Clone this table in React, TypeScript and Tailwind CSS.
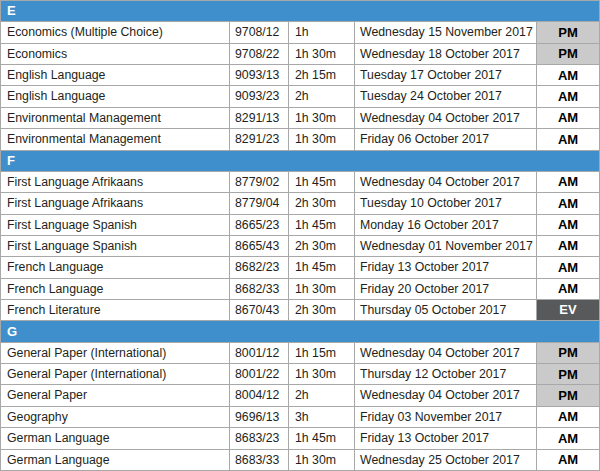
import React from "react";

type Row = [string, string, string, string, "AM" | "PM" | "EV"];

const sections: { letter: string; rows: Row[] }[] = [
  {
    letter: "E",
    rows: [
      ["Economics (Multiple Choice)", "9708/12", "1h", "Wednesday 15 November 2017", "PM"],
      ["Economics", "9708/22", "1h 30m", "Wednesday 18 October 2017", "PM"],
      ["English Language", "9093/13", "2h 15m", "Tuesday 17 October 2017", "AM"],
      ["English Language", "9093/23", "2h", "Tuesday 24 October 2017", "AM"],
      ["Environmental Management", "8291/13", "1h 30m", "Wednesday 04 October 2017", "AM"],
      ["Environmental Management", "8291/23", "1h 30m", "Friday 06 October 2017", "AM"],
    ],
  },
  {
    letter: "F",
    rows: [
      ["First Language Afrikaans", "8779/02", "1h 45m", "Wednesday 04 October 2017", "AM"],
      ["First Language Afrikaans", "8779/04", "2h 30m", "Tuesday 10 October 2017", "AM"],
      ["First Language Spanish", "8665/23", "1h 45m", "Monday 16 October 2017", "AM"],
      ["First Language Spanish", "8665/43", "2h 30m", "Wednesday 01 November 2017", "AM"],
      ["French Language", "8682/23", "1h 45m", "Friday 13 October 2017", "AM"],
      ["French Language", "8682/33", "1h 30m", "Friday 20 October 2017", "AM"],
      ["French Literature", "8670/43", "2h 30m", "Thursday 05 October 2017", "EV"],
    ],
  },
  {
    letter: "G",
    rows: [
      ["General Paper (International)", "8001/12", "1h 15m", "Wednesday 04 October 2017", "PM"],
      ["General Paper (International)", "8001/22", "1h 30m", "Thursday 12 October 2017", "PM"],
      ["General Paper", "8004/12", "2h", "Wednesday 04 October 2017", "PM"],
      ["Geography", "9696/13", "3h", "Friday 03 November 2017", "AM"],
      ["German Language", "8683/23", "1h 45m", "Friday 13 October 2017", "AM"],
      ["German Language", "8683/33", "1h 30m", "Wednesday 25 October 2017", "AM"],
    ],
  },
];

const cell = "h-[21.36px] border-r border-b border-[#a8a8a8] flex items-center";

export default function App() {
  return (
    <div className="w-[600px] h-[471px] bg-white overflow-hidden font-['Liberation_Sans',Arial,sans-serif] text-[12.3px] text-[#231f20]">
      <div className="grid grid-cols-[229px_59px_66px_182px_63px] border-l border-t border-[#a8a8a8]">
        {sections.map((s) => (
          <React.Fragment key={s.letter}>
            <div className={`${cell} col-span-5 bg-[#3f8fcd] text-white font-bold text-[13px] pl-[6px]`}>{s.letter}</div>
            {s.rows.map((r, i) => (
              <React.Fragment key={s.letter + i}>
                <div className={`${cell} pl-[6px]`}>{r[0]}</div>
                <div className={`${cell} pl-[5px]`}>{r[1]}</div>
                <div className={`${cell} pl-[6px]`}>{r[2]}</div>
                <div className={`${cell} pl-[5px]`}>{r[3]}</div>
                <div
                  className={`${cell} justify-center font-bold text-[13px] ${
                    r[4] === "PM"
                      ? "bg-[#cacaca] text-black"
                      : r[4] === "EV"
                      ? "bg-[#58595b] text-white"
                      : "bg-white text-black"
                  }`}
                >
                  {r[4]}
                </div>
              </React.Fragment>
            ))}
          </React.Fragment>
        ))}
      </div>
    </div>
  );
}
